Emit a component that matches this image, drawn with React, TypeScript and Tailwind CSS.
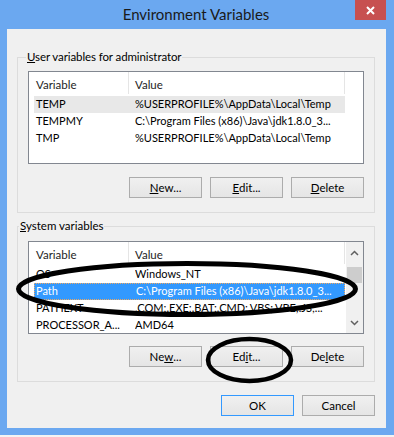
import React from "react";

const font = { fontFamily: 'Lato, "Noto Sans", sans-serif' };

function Btn({ children, primary }: { children: React.ReactNode; primary?: boolean }) {
  return (
    <div
      className={
        "w-[73px] h-[21px] flex items-center justify-center text-[11.5px] text-black bg-gradient-to-b from-[#F0F0F0] to-[#E5E5E5] border " +
        (primary ? "border-[#3399FF]" : "border-[#ACACAC]")
      }
    >
      {children}
    </div>
  );
}

type Row = { name: string; value: string; sel?: "grey" | "blue" };

function ListView({ rows, scroll }: { rows: Row[]; scroll?: boolean }) {
  return (
    <div className="h-[93px] border border-[#828790] bg-white flex overflow-hidden">
      <div className="flex-1 flex flex-col overflow-hidden">
        <div className="h-[24px] flex shrink-0">
          <div className="w-[100px] h-[22px] pl-[7px] pt-[4px] border-r border-[#E5E5E5] text-[11.5px] text-[#1E1E1E]">Variable</div>
          <div className="w-[216px] h-[22px] pl-[6px] pt-[4px] border-r border-[#E5E5E5] text-[11.5px] text-[#1E1E1E]">Value</div>
        </div>
        {rows.map((r, i) => (
          <div
            key={i}
            className={
              "ml-[5px] w-[311px] h-[17px] flex items-center shrink-0 text-[11px] whitespace-nowrap " +
              (r.sel === "blue"
                ? "bg-[#3399FF] text-white border border-dotted border-[#F0A860]"
                : r.sel === "grey"
                ? "bg-[#E8E8E8] text-black"
                : "text-black")
            }
          >
            <div className={"w-[101px] overflow-hidden " + (r.sel === "blue" ? "pl-[1px]" : "pl-[2px]")}>{r.name}</div>
            <div className="flex-1 overflow-hidden">{r.value}</div>
          </div>
        ))}
      </div>
      {scroll && (
        <div className="w-[17px] bg-[#F0F0F0] flex flex-col items-center shrink-0">
          <div className="h-[21px] flex items-center justify-center">
            <svg width="9" height="6" viewBox="0 0 9 6">
              <path d="M1 5 L4.5 1.5 L8 5" fill="none" stroke="#606060" strokeWidth="1.5" />
            </svg>
          </div>
          <div className="h-[4px]" />
          <div className="w-[15px] h-[16px] bg-[#CDCDCD]" />
          <div className="flex-1" />
          <div className="h-[21px] flex items-center justify-center">
            <svg width="9" height="6" viewBox="0 0 9 6">
              <path d="M1 1 L4.5 4.5 L8 1" fill="none" stroke="#606060" strokeWidth="1.5" />
            </svg>
          </div>
        </div>
      )}
    </div>
  );
}

export default function App() {
  const userRows: Row[] = [
    { name: "TEMP", value: "%USERPROFILE%\\AppData\\Local\\Temp", sel: "grey" },
    { name: "TEMPMY", value: "C:\\Program Files (x86)\\Java\\jdk1.8.0_3..." },
    { name: "TMP", value: "%USERPROFILE%\\AppData\\Local\\Temp" },
  ];
  const sysRows: Row[] = [
    { name: "OS", value: "Windows_NT" },
    { name: "Path", value: "C:\\Program Files (x86)\\Java\\jdk1.8.0_3...", sel: "blue" },
    { name: "PATHEXT", value: ".COM;.EXE;.BAT;.CMD;.VBS;.VBE;.JS;..." },
    { name: "PROCESSOR_A...", value: "AMD64" },
  ];
  return (
    <div className="w-[394px] h-[437px] bg-[#F3F3F3] relative overflow-hidden" style={font}>
      <div className="w-[394px] h-[435px] bg-[#6BA8F0] flex flex-col">
        <div className="h-[29px] relative flex items-center justify-center shrink-0">
          <span className="text-[15px] text-[#1A1A1A] mt-[-1px] ml-[-2px]">Environment Variables</span>
          <div className="absolute left-[355px] top-0 w-[31px] h-[20px] bg-[#C75050] flex items-center justify-center">
            <svg width="9" height="9" viewBox="0 0 9 9">
              <path d="M1 1 L8 8 M8 1 L1 8" stroke="white" strokeWidth="2" />
            </svg>
          </div>
        </div>
        <div className="ml-[7px] mr-[8px] h-[399px] bg-[#F0F0F0] pt-[28px] pl-[10px] pr-[11px] flex flex-col">
          <div className="relative border border-[#DCDCDC] pt-[13px] pl-[10px] pr-[10px] pb-[14px]">
            <div className="absolute left-[8px] top-[-9px] px-[1px] bg-[#F0F0F0] text-[11.5px] leading-[16px] tracking-[-0.1px] text-black">
              <u>U</u>ser variables for administrator
            </div>
            <ListView rows={userRows} />
            <div className="mt-[13px] flex justify-end gap-[8px]">
              <Btn><u>N</u>ew...</Btn>
              <Btn><u>E</u>dit...</Btn>
              <Btn><u>D</u>elete</Btn>
            </div>
          </div>
          <div className="relative mt-[13px] border border-[#DCDCDC] pt-[14px] pl-[10px] pr-[10px] pb-[14px]">
            <div className="absolute left-[1px] top-[-9px] px-[1px] bg-[#F0F0F0] text-[11.5px] leading-[16px] text-black">
              <u>S</u>ystem variables
            </div>
            <ListView rows={sysRows} scroll />
            <div className="mt-[12px] flex justify-end gap-[8px]">
              <Btn>Ne<u>w</u>...</Btn>
              <Btn>Ed<u>i</u>t...</Btn>
              <Btn>De<u>l</u>ete</Btn>
            </div>
          </div>
          <div className="mt-[13px] flex justify-end gap-[8px]">
            <Btn primary>OK</Btn>
            <Btn>Cancel</Btn>
          </div>
        </div>
      </div>
      <svg className="absolute left-0 top-0 pointer-events-none" width="394" height="437" viewBox="0 0 394 437">
        <ellipse cx="187" cy="289" rx="168.5" ry="25.5" fill="none" stroke="black" strokeWidth="5" />
        <ellipse cx="249.5" cy="360" rx="41.5" ry="21" fill="none" stroke="black" strokeWidth="4.5" />
      </svg>
    </div>
  );
}
